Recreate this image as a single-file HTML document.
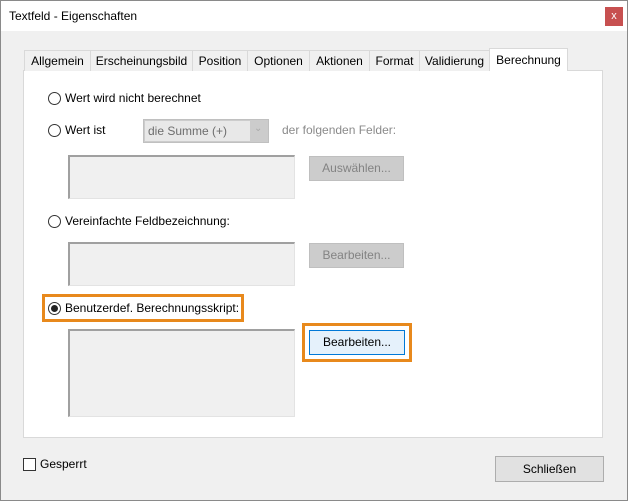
<!DOCTYPE html>
<html><head><style>
*{margin:0;padding:0;box-sizing:border-box}
body{width:628px;height:501px;font-family:"Liberation Sans",sans-serif;font-size:12px;color:#000;position:relative;overflow:hidden;background:#f0f0f0}
.a{position:absolute}
.win{left:0;top:0;width:628px;height:501px;border:1px solid #8a8a8a;background:#f0f0f0}
.title{left:1px;top:1px;width:626px;height:30px;background:#fff}
.tab{position:absolute;top:50px;height:21px;border:1px solid #d9d9d9;border-bottom:none;background:#f0f0f0;text-align:center;line-height:20px;font-size:12px}
.panel{left:23px;top:70px;width:580px;height:368px;background:#fff;border:1px solid #d9d9d9}
.radio{position:absolute;width:13px;height:13px;border:1px solid #333;border-radius:50%;background:#fff}
.box{position:absolute;background:#f0f0f0;border-top:2px solid #a0a0a0;border-left:2px solid #a0a0a0;border-right:1px solid #e3e3e3;border-bottom:1px solid #e3e3e3}
.btn{position:absolute;background:#cccccc;border:1px solid #bfbfbf;color:#838383;text-align:center;font-size:12px}
</style></head><body>
<div class="a win"></div>
<div class="a title"></div>
<div class="a" style="left:9px;top:9px;font-size:12px">Textfeld - Eigenschaften</div>
<div class="a" style="left:605px;top:7px;width:18px;height:19px;background:#c75050;color:#fff;font-size:11px;text-align:center;line-height:18px">x</div>
<div class="a panel"></div>
<div class="tab" style="left:24px;width:67px">Allgemein</div>
<div class="tab" style="left:90px;width:103px">Erscheinungsbild</div>
<div class="tab" style="left:192px;width:56px">Position</div>
<div class="tab" style="left:247px;width:63px">Optionen</div>
<div class="tab" style="left:309px;width:61px">Aktionen</div>
<div class="tab" style="left:369px;width:51px">Format</div>
<div class="tab" style="left:419px;width:71px">Validierung</div>
<div class="tab" style="left:489px;top:48px;height:23px;width:79px;background:#fff;line-height:22px">Berechnung</div>

<div class="radio" style="left:48px;top:92px"></div>
<div class="a" style="left:65px;top:91px">Wert wird nicht berechnet</div>
<div class="radio" style="left:48px;top:124px"></div>
<div class="a" style="left:65px;top:123px">Wert ist</div>
<div class="a" style="left:143px;top:119px;width:126px;height:24px;background:#ccc;border:1px solid #c0c0c0"></div>
<div class="a" style="left:145px;top:121px;width:105px;height:20px;background:#e8e8e8"></div>
<div class="a" style="left:148px;top:124px;color:#6d6d6d">die Summe (+)</div>
<div class="a" style="left:254px;top:123px;color:#aaa;font-size:10px">&#8964;</div>
<div class="a" style="left:282px;top:123px;color:#8a8a8a">der folgenden Felder:</div>
<div class="box" style="left:68px;top:155px;width:227px;height:44px"></div>
<div class="btn" style="left:309px;top:156px;width:95px;height:25px;line-height:23px">Auswählen...</div>
<div class="radio" style="left:48px;top:215px"></div>
<div class="a" style="left:65px;top:214px">Vereinfachte Feldbezeichnung:</div>
<div class="box" style="left:68px;top:242px;width:227px;height:44px"></div>
<div class="btn" style="left:309px;top:243px;width:95px;height:25px;line-height:23px">Bearbeiten...</div>

<div class="a" style="left:42px;top:294px;width:202px;height:28px;border:3px solid #e8891c"></div>
<div class="radio" style="left:48px;top:302px"></div>
<div class="a" style="left:51px;top:305px;width:7px;height:7px;border-radius:50%;background:#222"></div>
<div class="a" style="left:65px;top:301px">Benutzerdef. Berechnungsskript:</div>
<div class="box" style="left:68px;top:329px;width:227px;height:88px"></div>
<div class="a" style="left:302px;top:323px;width:110px;height:39px;border:3px solid #e8891c"></div>
<div class="a" style="left:309px;top:330px;width:96px;height:25px;background:#e5f1fb;border:1px solid #0078d7;text-align:center;line-height:23px">Bearbeiten...</div>

<div class="a" style="left:23px;top:458px;width:13px;height:13px;border:1px solid #333;background:#fff"></div>
<div class="a" style="left:40px;top:457px">Gesperrt</div>
<div class="a" style="left:495px;top:456px;width:109px;height:26px;background:#e1e1e1;border:1px solid #adadad;text-align:center;line-height:24px">Schließen</div>
</body></html>
